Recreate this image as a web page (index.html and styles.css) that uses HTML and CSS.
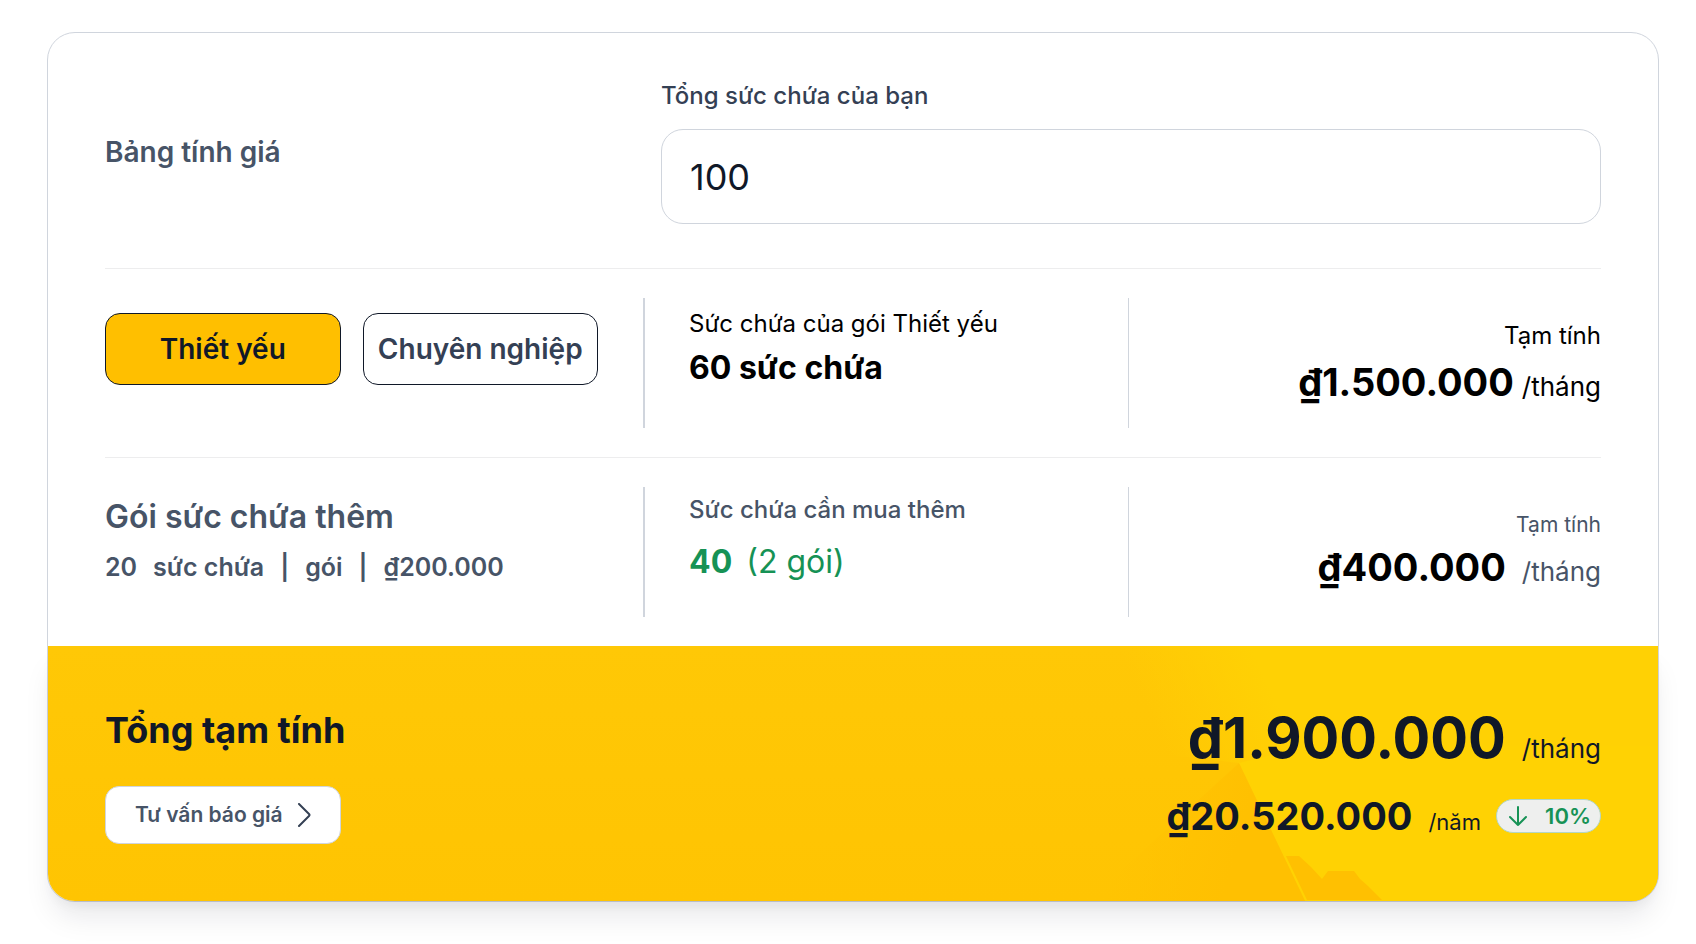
FILE: index.html
```html
<!DOCTYPE html>
<html lang="vi">
<head>
<meta charset="utf-8">
<meta name="viewport" content="width=device-width, initial-scale=1">
<title>Bảng tính giá</title>
<link rel="stylesheet" href="styles.css">
</head>
<body>
<main class="calculator">
  <section class="details">
    <div class="row capacity">
      <h1 class="capacity-title">Bảng tính giá</h1>
      <div class="field">
        <label class="field-label" for="capacity">Tổng sức chứa của bạn</label>
        <input class="field-input" id="capacity" type="text" inputmode="numeric" value="100">
      </div>
    </div>

    <div class="row plan">
      <div class="plan-tabs">
        <button class="plan-tab is-active" type="button">Thiết yếu</button>
        <button class="plan-tab" type="button">Chuyên nghiệp</button>
      </div>
      <div class="quota">
        <p class="quota-label">Sức chứa của gói Thiết yếu</p>
        <p class="quota-value">60 sức chứa</p>
      </div>
      <div class="cost">
        <p class="cost-label">Tạm tính</p>
        <p class="price-line tight"><strong class="price">₫1.500.000</strong><span class="period">/tháng</span></p>
      </div>
    </div>

    <div class="row extra">
      <div class="pack">
        <h2 class="pack-title">Gói sức chứa thêm</h2>
        <p class="pack-info"><span>20</span><span>sức chứa</span><span>|</span><span>gói</span><span>|</span><span>₫200.000</span></p>
      </div>
      <div class="quota">
        <p class="quota-label">Sức chứa cần mua thêm</p>
        <p class="quota-need"><strong>40</strong><span>(2 gói)</span></p>
      </div>
      <div class="cost">
        <p class="cost-label">Tạm tính</p>
        <p class="price-line"><strong class="price">₫400.000</strong><span class="period">/tháng</span></p>
      </div>
    </div>
  </section>

  <section class="total">
    <svg class="total-art" viewBox="0 0 1610 255" preserveAspectRatio="none" aria-hidden="true">
      <defs>
        <linearGradient id="glow" gradientUnits="userSpaceOnUse" x1="1120" y1="110" x2="1230" y2="60">
          <stop offset="0" stop-color="#ffd004" stop-opacity="0"/>
          <stop offset="1" stop-color="#ffd104"/>
        </linearGradient>
        <linearGradient id="shade" gradientUnits="userSpaceOnUse" x1="1080" y1="170" x2="1190" y2="200">
          <stop offset="0" stop-color="#ffc002" stop-opacity="0"/>
          <stop offset="1" stop-color="#ffc001"/>
        </linearGradient>
      </defs>
      <path fill="url(#glow)" d="M1040 0H1610V255H1257L1191 117L1040 100Z"/>
      <path fill="#ffd203" d="M1191 117L1260 100H1610V255H1257Z"/>
      <path fill="url(#shade)" d="M1191 117L1257 255H1040Z"/>
      <path fill="#ffc001" d="M1238 210H1251L1263 221L1274 233L1280 225H1306L1312 233L1320 240L1334 254H1259Z"/>
    </svg>
    <div class="total-main">
      <h2 class="total-title">Tổng tạm tính</h2>
      <button class="quote" type="button">
        <span>Tư vấn báo giá</span>
        <svg class="chevron" viewBox="0 0 14 24" aria-hidden="true"><path d="M2 1L12 11Q13 12 12 13L2 23"/></svg>
      </button>
    </div>
    <div class="total-prices">
      <p class="price-line"><strong class="price-big">₫1.900.000</strong><span class="period">/tháng</span></p>
      <div class="yearly">
        <p class="price-line"><strong class="price">₫20.520.000</strong><span class="period-small">/năm</span></p>
        <span class="saving">
          <svg class="arrow" viewBox="0 0 18 20" aria-hidden="true"><path d="M9 1V19M1 11L9 19L17 11"/></svg>
          <span>10%</span>
        </span>
      </div>
    </div>
  </section>
</main>
</body>
</html>
```
FILE: styles.css
```css
* {
  box-sizing: border-box;
}

body {
  margin: 0;
  padding: 32px 37px 42px 47px;
  background: #fff;
  color: #475467;
  font-family: Inter, "Noto Sans", sans-serif;
  font-size: 24px;
  line-height: 32px;
}

h1,
h2,
p {
  margin: 0;
}

button,
input {
  font: inherit;
}

.calculator {
  border: 1px solid #d0d5dd;
  border-radius: 28px;
}

.details {
  padding: 0 57px;
}

.row {
  display: grid;
  grid-template-columns: 538fr 485fr 473fr;
  padding: 29px 0;
}

.row + .row {
  border-top: 1px solid #ededee;
}

.capacity {
  grid-template-columns: 556fr 940fr;
  align-items: center;
  padding: 46px 0 44px;
}

.capacity-title {
  font-size: 28px;
  font-weight: 600;
}

.field {
  display: flex;
  flex-direction: column;
  gap: 16px;
}

.field-label {
  color: #344054;
  font-weight: 500;
  line-height: 34px;
}

.field-input {
  width: 100%;
  height: 95px;
  padding: 0 28px;
  border: 1px solid #d0d5dd;
  border-radius: 22px;
  background: #fff;
  color: #101828;
  font-size: 36px;
}

.plan-tabs {
  display: grid;
  grid-template-columns: 1fr 1fr;
  gap: 22px;
  align-items: start;
  padding: 15px 45px 0 0;
}

.plan-tab {
  height: 72px;
  padding: 0;
  border: 1px solid #101828;
  border-radius: 15px;
  background: #fff;
  color: #344054;
  font-size: 28px;
  font-weight: 600;
  white-space: nowrap;
}

.plan-tab.is-active {
  background: #ffbf00;
  color: #101828;
}

.quota {
  min-height: 130px;
  padding: 10px 0 0 44px;
  border-left: 2px solid #d0d5dd;
}

.plan .quota,
.plan .cost {
  color: #000;
}

.quota-value {
  margin-top: 6px;
  font-size: 32px;
  font-weight: 700;
  line-height: 44px;
}

.cost {
  padding-top: 22px;
  border-left: 1px solid #d0d5dd;
  text-align: right;
}

.cost-label {
  margin-bottom: 6px;
}

.price-line {
  display: flex;
  align-items: baseline;
  justify-content: flex-end;
  gap: 16px;
}

.price-line.tight {
  gap: 8px;
}

.price {
  color: #000;
  font-size: 38px;
  font-weight: 700;
  line-height: 48px;
}

.period {
  font-size: 26px;
}

.pack {
  padding-top: 8px;
}

.pack-title {
  font-size: 32px;
  font-weight: 600;
  line-height: 44px;
}

.pack-info {
  display: flex;
  gap: 16px;
  margin-top: 12px;
  font-size: 25px;
  font-weight: 600;
}

.extra .quota {
  padding-top: 7px;
}

.extra .quota-label {
  font-weight: 500;
}

.quota-need {
  display: flex;
  gap: 14px;
  margin-top: 14px;
  color: #169255;
  font-size: 32px;
  line-height: 44px;
}

.extra .cost {
  padding-top: 24px;
}

.extra .cost-label {
  margin-bottom: 4px;
  font-size: 21px;
  line-height: 28px;
}

.total {
  position: relative;
  display: flex;
  justify-content: space-between;
  padding: 56px 57px 57px;
  border-radius: 0 0 27px 27px;
  background: linear-gradient(180deg, #ffc806, #ffc402);
  box-shadow: 0 20px 30px -6px rgba(16, 24, 40, 0.1), 0 8px 12px -4px rgba(16, 24, 40, 0.05);
  color: #101828;
}

.total-art {
  position: absolute;
  inset: 0;
  width: 100%;
  height: 100%;
  border-radius: 0 0 27px 27px;
}

.total-main,
.total-prices {
  position: relative;
}

.total-main {
  display: flex;
  flex-direction: column;
  align-items: flex-start;
  gap: 32px;
  padding-top: 4px;
}

.total-title {
  font-size: 36px;
  font-weight: 700;
  line-height: 48px;
}

.quote {
  display: flex;
  align-items: center;
  justify-content: center;
  gap: 14px;
  height: 58px;
  padding: 0 29px;
  border: 1px solid #d0d5dd;
  border-radius: 14px;
  background: #fff;
  color: #475467;
  font-size: 21px;
  font-weight: 600;
  white-space: nowrap;
}

.chevron {
  width: 14px;
  height: 24px;
  fill: none;
  stroke: #344054;
  stroke-width: 2;
  stroke-linecap: round;
}

.total-prices {
  display: flex;
  flex-direction: column;
  gap: 18px;
}

.total-prices .price {
  color: #101828;
}

.price-big {
  font-size: 56px;
  font-weight: 700;
  line-height: 72px;
}

.period-small {
  font-size: 22px;
}

.yearly {
  display: flex;
  align-items: center;
  justify-content: flex-end;
  gap: 15px;
}

.saving {
  display: flex;
  align-items: center;
  justify-content: space-between;
  width: 105px;
  height: 34px;
  padding: 0 9px 0 12px;
  border: 1px solid #b4d6c4;
  border-radius: 17px;
  background: #eeefee;
  color: #169255;
  font-size: 22px;
  font-weight: 600;
}

.arrow {
  width: 18px;
  height: 20px;
  fill: none;
  stroke: currentColor;
  stroke-width: 2;
  stroke-linecap: round;
  stroke-linejoin: round;
}
```
